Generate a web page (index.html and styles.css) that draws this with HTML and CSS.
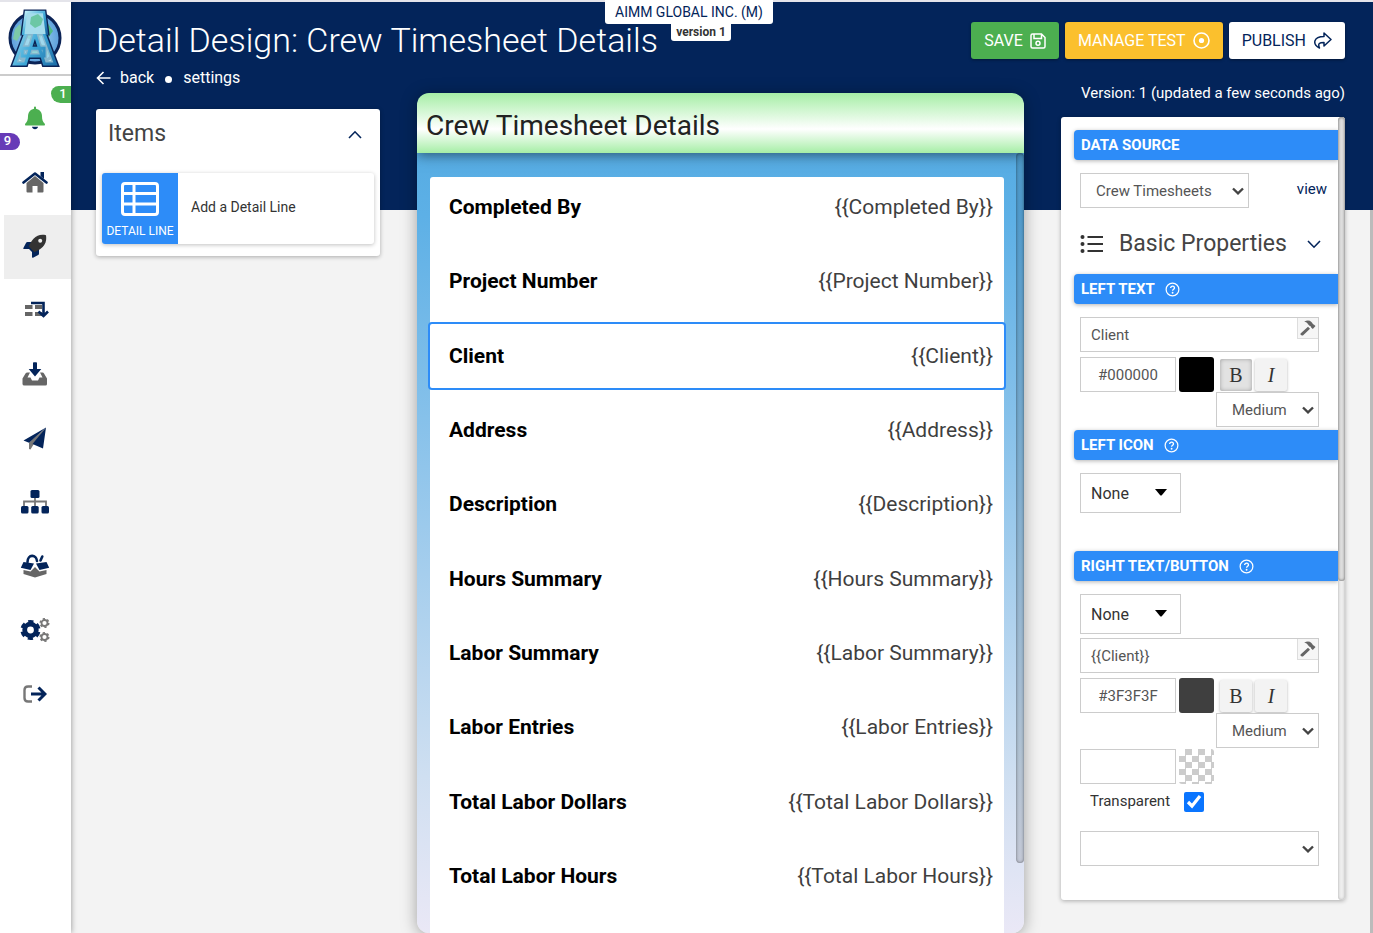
FILE: index.html
```html
<!doctype html>
<html lang="en">
    <head>
        <meta charset="utf-8">
        <title>Detail Design: Crew Timesheet Details</title>
        <link rel="stylesheet" href="styles.css">
    </head>
    <body>
        <!-- shared icons -->
        <svg class="defs" width="0" height="0" aria-hidden="true">
            <symbol id="help" viewBox="0 0 16 16">
                <circle cx="8" cy="8" r="6.8" fill="none" stroke="currentColor" stroke-width="1.3"/>
                <path d="M6 6.4c0-2.6 4.1-2.5 4.1 0 0 1.4-2 1.4-2 3" fill="none" stroke="currentColor" stroke-width="1.4"/>
                <circle cx="8.1" cy="11.5" r="1" fill="currentColor"/>
            </symbol>
            <symbol id="hammer" viewBox="0 0 16 16">
                <path d="M.8 13.2 8 6.7l2 2.1-6.8 6.4c-1.500 1.200-3.700-.6-2.400-2z" fill="currentColor"/>
                <path d="M4.200 1.800C7 .1 9.500.3 11.400 2l1.100 1.300c.2.800.5 1.200 1.300 1.100l1.700 1.700-2.700 2.900-1.700-1.600c.1-.8-.3-1.200-1-1.200L8 4.200C7.400 2.800 6 2.200 4.200 1.800z" fill="currentColor"/>
            </symbol>
            <symbol id="chev" viewBox="0 0 12 8">
                <path d="M1 1.500 6 6.300 11 1.500" fill="none" stroke="currentColor" stroke-width="2.400"/>
            </symbol>
            <symbol id="caret" viewBox="0 0 12 7"><path d="M0 0h12L6.800 6.200q-.8.7-1.600 0z" fill="currentColor"/></symbol>
        </svg>

        <nav class="sidebar">
            <a class="logo" href="#" aria-label="Home page">
                <svg width="56" height="60" viewBox="0 0 56 60">
                    <defs>
                        <linearGradient id="ice" x1="0" y1="0" x2="1" y2="1">
                            <stop offset="0" stop-color="#c9f4fb"/>
                            <stop offset=".5" stop-color="#3fa9d8"/>
                            <stop offset="1" stop-color="#155f9c"/>
                        </linearGradient>
                        <radialGradient id="sea"><stop offset="0" stop-color="#a9dcf5"/><stop offset="1" stop-color="#5b9ddb"/></radialGradient>
                    </defs>
                    <circle cx="28" cy="30" r="25" fill="url(#sea)" stroke="#0b2356" stroke-width="3"/>
                    <path d="M17 12c8-5 18-4 23 2l6 9-5 7-6-3-4 6 7 6 4 7-8 6-10-5-3-9 3-6-8-4-2-8z" fill="#4fb984"/>
                    <path d="M8 21l5-5 2 8-5 9-4-2z" fill="#7cc9a8"/>
                    <text class="mark mark-edge" x="28" y="56" text-anchor="middle">A</text>
                    <path d="M15 26l3-23h20l3 23z" fill="#0b2356" stroke="#0b2356" stroke-width="3"/>
                    <text class="mark" x="28" y="56" text-anchor="middle">A</text>
                    <path d="M16 26l3-22h18l3 22z" fill="#a5dcec"/>
                    <path d="M24 9l7-3 5 5-2 6-6 3-5-4z" fill="#6cc7a5"/>
                    <path d="M16 27l3-23h18l3 23" fill="none" stroke="url(#ice)" stroke-width="2.500"/>
                </svg>
            </a>
            <ul class="menu">
                <li><a href="#" aria-label="Notifications">
                    <svg width="22" height="24" viewBox="0 0 22 24"><path d="M10 1.500a1 1 0 0 1 2 0v1.200c4 .8 6 4 6 7.500 0 4 1 5.500 2.600 7.200.8 1 .3 2.100-.8 2.100H2.200c-1.100 0-1.600-1.100-.8-2.100C3 15.700 4 14.200 4 10.200c0-3.500 2-6.700 6-7.500z" fill="#4caf50"/><path d="M8 20.800h6c-.3 3.200-5.700 3.200-6 0z" fill="#03245a"/></svg>
                    </a><span class="badge badge-green">1</span><span class="badge badge-purple">9</span></li>
                <li><a href="#" aria-label="Home">
                    <svg width="26" height="22" viewBox="0 0 26 22"><path d="M4.500 12 13 5l8.500 7v8.500q0 1-1 1h-5V15h-5v6.500h-5q-1 0-1-1z" fill="#666"/><path d="m1.500 11.500 11.500-9 11.500 9" fill="none" stroke="#03245a" stroke-width="2.600" stroke-linecap="round" stroke-linejoin="round"/><path d="M18.500 1h3.500v7l-3.500-3z" fill="#03245a"/></svg></a></li>
                <li class="active"><a href="#" aria-label="Apps">
                    <svg width="24" height="24" viewBox="0 0 24 24"><path d="M9 8H4.500Q3.500 8 3 9L.4 14q-.4 1 .7 1h4.900l3 3v5q0 1 1 .7l5.200-2.600q.8-.5.8-1.500V15z" fill="#03245a"/><path d="M23 1.200c.8 5-.4 9.200-4.500 12.800-2 1.700-4.500 3-7 4.200L5.800 12.500C7 9.500 8.500 7 10.500 4.800 14 1 18 .3 23 1.200z" fill="#333"/><circle cx="17.200" cy="6.800" r="2" fill="#eee"/></svg></a></li>
                <li><a href="#" aria-label="Flows">
                    <svg class="flows" width="24" height="18" viewBox="0 0 24 18"><path d="M0 4h7.500v4H0zM0 11h7.500v4H0zM10 4h7v4h-7zM10 11h7v4h-7z" fill="#666"/><path d="M6 2h12.500v12M13.500 10.500l5 4.500 4.500-4.500" fill="none" stroke="#03245a" stroke-width="2.600"/></svg></a></li>
                <li><a href="#" aria-label="Inbox">
                    <svg width="26" height="24" viewBox="0 0 26 24"><path d="M5.500 10.500H8l-2.500 5h3l1.500 3h6l1.500-3h3l-2.500-5h2.500q1 0 1.500 1l3 5V22q0 1.500-1.500 1.500h-21Q.5 23.500.5 22v-5.500l3-5q.5-1 2-1z" fill="#666"/><path d="M11 1q0-.8.8-.8h2.400q.8 0 .8.800v6h4.300L13 14.500 6.700 7H11z" fill="#03245a"/></svg></a></li>
                <li><a href="#" aria-label="Send">
                    <svg width="24" height="23" viewBox="0 0 24 23"><path d="M23 .5 6 15.500V22l1.500.5 3-5z" fill="#777"/><path d="M23 .5 20 21.500 9.500 17zM23 .5.5 13.500l5.500 2.300z" fill="#03245a"/></svg></a></li>
                <li><a href="#" aria-label="Organization">
                    <svg width="30" height="24" viewBox="0 0 30 24"><path d="M4 17v-5.500h22V17M15 7v10" fill="none" stroke="#777" stroke-width="1.800"/><g fill="#03245a"><rect x="10.500" width="9" height="8" rx="1.500"/><rect x="1" y="16" width="7.500" height="7.500" rx="1.500"/><rect x="11.200" y="16" width="7.500" height="7.500" rx="1.500"/><rect x="21.500" y="16" width="7.500" height="7.500" rx="1.500"/></g></svg></a></li>
                <li><a href="#" aria-label="Packages">
                    <svg width="30" height="24" viewBox="0 0 30 24"><path d="M3.500 16l7 1.500L15 13l4.500 4.500 7-1.500v4L15 23.500 3.500 20z" fill="#666"/><path d="M3.500 8 14 9.500 10.500 16 .8 13.800zM26.500 8 16 9.500l3.500 6.500 9.700-2.200z" fill="#03245a"/><path d="M7.500 8c0-8 9-8 9.500-1M20.500 6.500l1.800-4" fill="none" stroke="#03245a" stroke-width="2.600" stroke-linecap="round"/></svg></a></li>
                <li><a href="#" aria-label="Settings">
                    <svg width="30" height="24" viewBox="0 0 30 24"><circle cx="10.500" cy="12" r="5.800" fill="none" stroke="#03245a" stroke-width="4.800"/><circle cx="10.500" cy="12" r="8.700" fill="none" stroke="#03245a" stroke-width="2.800" stroke-dasharray="5.200 3.911" stroke-dashoffset="-2"/><g fill="none" stroke="#777"><circle cx="24.500" cy="5" r="3" stroke-width="1.800"/><circle cx="24.500" cy="5" r="4.300" stroke-width="1.500" stroke-dasharray="2.200 2.300"/><circle cx="24.500" cy="19" r="3" stroke-width="1.800"/><circle cx="24.500" cy="19" r="4.300" stroke-width="1.500" stroke-dasharray="2.200 2.300"/></g></svg></a></li>
                <li><a href="#" aria-label="Log out">
                    <svg width="24" height="18" viewBox="0 0 24 18"><path d="M9 1.500H5Q1.500 1.500 1.500 5v8q0 3.500 3.500 3.500h4" fill="none" stroke="#777" stroke-width="2.400"/><path d="M8 9h14M15.500 2.500 22 9l-6.500 6.500" fill="none" stroke="#03245a" stroke-width="3"/></svg></a></li>
            </ul>
        </nav>

        <div class="tenant">
            <span class="tenant-name">AIMM GLOBAL INC. (M)</span>
            <span class="tenant-version">version 1</span>
        </div>

        <main class="page">
            <header class="page-head">
                <div>
                    <h1>Detail Design: Crew Timesheet Details</h1>
                    <div class="crumbs">
                        <a href="#"><svg width="15" height="14" viewBox="0 0 15 14"><path d="M14.500 7H1.500M7.500 1l-6 6 6 6" fill="none" stroke="currentColor" stroke-width="1.600"/></svg>back</a>
                        <i class="dot"></i>
                        <a href="#">settings</a>
                    </div>
                </div>
                <div class="actions">
                    <button class="btn btn-save" type="button">SAVE
                        <svg width="16" height="16" viewBox="0 0 16 16" fill="none" stroke="currentColor" stroke-width="1.500"><path d="M1 2.500Q1 1 2.500 1h9L15 4.500v9q0 1.500-1.500 1.500h-11Q1 15 1 13.500zM4 1v4.500h7.500V1"/><circle cx="8" cy="10.300" r="2"/></svg></button>
                    <button class="btn btn-test" type="button">MANAGE TEST
                        <svg width="17" height="17" viewBox="0 0 17 17"><circle cx="8.500" cy="8.500" r="7.500" fill="none" stroke="currentColor" stroke-width="1.600"/><circle cx="8.500" cy="8.500" r="2.600" fill="currentColor"/></svg></button>
                    <button class="btn btn-publish" type="button">PUBLISH
                        <svg width="19" height="17" viewBox="0 0 19 17"><path d="M11 1l7 6.500-7 6.500v-3.500c-4.500 0-6.500.8-4.500 5.500C-1 12 .5 4.500 11 4.500z" fill="none" stroke="currentColor" stroke-width="1.500" stroke-linejoin="round"/></svg></button>
                </div>
            </header>

            <div class="columns">
                <section class="card items">
                    <h2>Items
                        <svg width="14" height="9" viewBox="0 0 14 9"><path d="M1 8l6-6.200L13 8" fill="none" stroke="#03245a" stroke-width="1.600"/></svg></h2>
                    <button class="item" type="button">
                        <span class="item-tile">
                            <svg width="38" height="34" viewBox="0 0 38 34" fill="none" stroke="#fff" stroke-width="3"><rect x="1.500" y="1.500" width="35" height="31" rx="2.500"/><path d="M1.500 11.500h35M1.500 22h35M13 1.500v31"/></svg>
                            DETAIL LINE
                        </span>
                        <span class="item-name">Add a Detail Line</span>
                    </button>
                </section>

                <section class="preview">
                    <h2>Crew Timesheet Details</h2>
                    <div class="preview-body">
                        <ul class="lines">
                            <li><b>Completed By</b><span>{{Completed By}}</span></li>
                            <li><b>Project Number</b><span>{{Project Number}}</span></li>
                            <li class="selected"><b>Client</b><span>{{Client}}</span></li>
                            <li><b>Address</b><span>{{Address}}</span></li>
                            <li><b>Description</b><span>{{Description}}</span></li>
                            <li><b>Hours Summary</b><span>{{Hours Summary}}</span></li>
                            <li><b>Labor Summary</b><span>{{Labor Summary}}</span></li>
                            <li><b>Labor Entries</b><span>{{Labor Entries}}</span></li>
                            <li><b>Total Labor Dollars</b><span>{{Total Labor Dollars}}</span></li>
                            <li><b>Total Labor Hours</b><span>{{Total Labor Hours}}</span></li>
                        </ul>
                        <i class="thumb"></i>
                    </div>
                </section>

                <aside class="side">
                    <p class="updated">Version: 1 (updated a few seconds ago)</p>
                    <form class="card props">
                        <div class="props-body">
                            <h3><label for="source">DATA SOURCE</label></h3>
                            <div class="fields source">
                                <span class="select select-source"><select id="source"><option>Crew Timesheets</option></select><svg width="12" height="8"><use href="#chev"/></svg></span>
                                <a href="#">view</a>
                            </div>

                            <h2><svg width="24" height="20" viewBox="0 0 24 20" fill="#333"><circle cx="2.500" cy="3" r="2"/><circle cx="2.500" cy="10" r="2"/><circle cx="2.500" cy="17" r="2"/><path d="M7.500 2H23v2H7.500zM7.500 9H23v2H7.500zM7.500 16H23v2H7.500z"/></svg>
                                <span>Basic Properties</span>
                                <svg width="14" height="9" viewBox="0 0 14 9"><path d="M1 1l6 6.200L13 1" fill="none" stroke="#03245a" stroke-width="1.600"/></svg></h2>

                            <h3><label for="left-text">LEFT TEXT</label><svg width="15" height="15"><use href="#help"/></svg></h3>
                            <div class="fields">
                                <div class="text">
                                    <input id="left-text" type="text" value="Client">
                                    <button class="build" type="button" aria-label="Build left text"><svg width="16" height="16"><use href="#hammer"/></svg></button>
                                </div>
                                <div class="format">
                                    <input class="hex" type="text" value="#000000" aria-label="Left text color">
                                    <button class="swatch black" type="button" aria-label="Pick left text color"></button>
                                    <button class="toggle on" type="button">B</button>
                                    <button class="toggle" type="button"><em>I</em></button>
                                </div>
                                <span class="select select-size"><select aria-label="Left text size"><option>Medium</option></select><svg width="12" height="8"><use href="#chev"/></svg></span>
                            </div>

                            <h3><label for="left-icon">LEFT ICON</label><svg width="15" height="15"><use href="#help"/></svg></h3>
                            <div class="fields left-icon">
                                <span class="select select-icon"><select id="left-icon"><option>None</option></select><svg width="12" height="7"><use href="#caret"/></svg></span>
                            </div>

                            <h3><label for="right-text">RIGHT TEXT/BUTTON</label><svg width="15" height="15"><use href="#help"/></svg></h3>
                            <div class="fields">
                                <span class="select select-icon"><select aria-label="Right icon"><option>None</option></select><svg width="12" height="7"><use href="#caret"/></svg></span>
                                <div class="text">
                                    <input id="right-text" type="text" value="{{Client}}">
                                    <button class="build" type="button" aria-label="Build right text"><svg width="16" height="16"><use href="#hammer"/></svg></button>
                                </div>
                                <div class="format">
                                    <input class="hex" type="text" value="#3F3F3F" aria-label="Right text color">
                                    <button class="swatch grey" type="button" aria-label="Pick right text color"></button>
                                    <button class="toggle" type="button">B</button>
                                    <button class="toggle" type="button"><em>I</em></button>
                                </div>
                                <span class="select select-size"><select aria-label="Right text size"><option>Medium</option></select><svg width="12" height="8"><use href="#chev"/></svg></span>
                                <div class="format background">
                                    <input class="hex" type="text" value="" aria-label="Background color">
                                    <button class="swatch checker" type="button" aria-label="Pick background color"></button>
                                </div>
                                <div class="transparent">
                                    <label for="transparent">Transparent</label>
                                    <input id="transparent" type="checkbox" checked>
                                </div>
                                <span class="select select-action"><select aria-label="Button action"><option></option></select><svg width="12" height="8"><use href="#chev"/></svg></span>
                            </div>
                        </div>
                        <div class="track"><i class="thumb"></i></div>
                    </form>
                </aside>
            </div>
        </main>
    </body>
</html>
```
FILE: styles.css
```css
*{box-sizing:border-box;}
body{margin:0;height:100vh;display:flex;overflow:hidden;border-top:2px solid #e4e4ea;background:#f3f3f3;color:#333;font:16px/20px Roboto,"Liberation Sans",sans-serif;}
h1,h2,h3,p,ul{margin:0;padding:0;font-weight:400;}
ul{list-style:none;}
a{color:#03245a;text-decoration:none;}
button,input,select{margin:0;font-family:inherit;font-size:15px;color:#333;}
button{padding:0;border:0;cursor:pointer;}
svg{flex:none;}
.defs{position:absolute;}

/* sidebar */
.sidebar{flex:none;width:71px;background:#fff;box-shadow:0 0 6px rgba(0,0,0,.4);z-index:2;}
.logo{display:flex;height:74px;padding:6px 2px 0 0;justify-content:center;border-bottom:2px solid #ccc;}
.logo svg{overflow:visible;}
.mark{font:900 60px/60px Roboto,sans-serif;fill:#a5dcec;fill-opacity:.8;stroke:url(#ice);stroke-width:3px;}
.mark-edge{fill:none;stroke:#0b2356;stroke-width:6px;}
.menu{padding-top:11px;}
.menu li{position:relative;height:64px;margin-left:4px;}
.menu a{display:flex;height:100%;padding:0 6px 2px 0;align-items:center;justify-content:center;}
.menu .active{background:#eee;}
.menu .flows{margin-left:4px;}
.badge{position:absolute;height:17px;color:#fff;font:500 13px/16px Roboto,sans-serif;text-align:center;}
.badge-green{top:-1px;right:0;width:20px;padding-left:4px;background:#4caf50;border-radius:8px 0 0 10px;}
.badge-purple{top:46px;left:-4px;width:20px;padding-right:5px;background:#673ab7;border-radius:0 10px 8px 0;}

/* tenant tag hanging over the page head */
.tenant{position:absolute;top:0;left:5px;right:0;z-index:3;display:flex;flex-direction:column;align-items:center;pointer-events:none;}
.tenant-name{padding:2px 10px;background:#fff;border-radius:0 0 3px 3px;color:#03245a;font-size:14px;}
.tenant-version{margin-left:24px;padding:0 5px;background:#fff;border-radius:0 0 3px 3px;font-size:12px;font-weight:700;line-height:17px;}

/* page */
.page{flex:1;min-width:0;display:flex;flex-direction:column;padding:20px 28px 0 25px;background:linear-gradient(#03245a,#03245a) 0 0/100% 208px no-repeat,linear-gradient(#bbb,#bbb) 100% 0/3px 100% no-repeat,#f3f3f3;}
.page-head{display:flex;justify-content:space-between;align-items:flex-start;height:64px;color:#fff;}
h1{font-size:34px;font-weight:300;line-height:36px;}
.crumbs{display:flex;align-items:center;margin-top:12px;line-height:16px;}
.crumbs a{display:flex;align-items:center;gap:9px;color:#fff;}
.dot{width:7px;height:7px;margin:2px 11px 0;border-radius:50%;background:#fff;}
.actions{display:flex;gap:6px;}
.btn{display:flex;align-items:center;gap:7px;height:37px;padding:0 13px;border-radius:3px;color:#fff;font-size:16px;box-shadow:0 1px 3px rgba(0,0,0,.4);}
.btn-save{background:#4caf50;}
.btn-test{background:#fbc02d;}
.btn-publish{background:#fff;color:#03245a;}
.columns{flex:1;min-height:0;display:grid;grid-template-columns:284px 1fr 284px;gap:37px;}
.card{background:#fff;border-radius:3px;box-shadow:0 1px 4px rgba(0,0,0,.3);}

/* items */
.items{align-self:start;margin-top:23px;padding:10px 6px 12px;}
.items h2{display:flex;justify-content:space-between;align-items:center;padding:0 12px 0 6px;margin-bottom:24px;font-size:23px;line-height:30px;color:#444;}
.item{display:flex;align-items:center;width:100%;height:71px;background:#fff;border-radius:3px;box-shadow:0 1px 4px rgba(0,0,0,.25);overflow:hidden;text-align:left;}
.item-tile{display:flex;flex-direction:column;align-items:center;justify-content:space-between;width:76px;height:100%;padding:9px 0 5px;background:#2d8cf8;color:#fff;font-size:12px;line-height:16px;}
.item-name{padding:0 0 3px 13px;font-size:14px;}

/* preview */
.preview{display:flex;flex-direction:column;margin-top:7px;border-radius:12px;box-shadow:0 2px 16px rgba(0,0,0,.35);overflow:hidden;}
.preview h2{position:relative;z-index:1;height:60px;padding:3px 0 0 9px;background:linear-gradient(#a6eea6,#fff 60%,#a6eea6);box-shadow:0 2px 12px rgba(0,0,0,.5);font-size:28px;line-height:60px;color:#222;}
.preview-body{position:relative;flex:1;display:flex;padding:24px 20px 0 13px;background:linear-gradient(#56ace3,#5db0e6 8%,#cfdff1 80%,#eae8f6);}
.preview-body .thumb{position:absolute;top:0;right:0;width:8px;height:91%;border-radius:4px;background:rgba(0,0,0,.12);box-shadow:inset 0 0 3px rgba(0,0,0,.5);}
.lines{flex:1;display:flex;flex-direction:column;justify-content:space-between;padding-bottom:27px;background:#fff;border-radius:3px 3px 0 0;font-size:21px;}
.lines li{position:relative;display:flex;align-items:center;justify-content:space-between;height:60px;padding:0 11px 0 19px;color:#3f3f3f;}
.lines b{color:#000;}
.lines .selected:after{content:"";position:absolute;inset:-4px -2px;border:2px solid #2d8cf8;border-radius:4px;}

/* properties */
.updated{font-size:15px;line-height:14px;color:#fff;text-align:right;white-space:nowrap;}
.props{display:flex;height:783px;margin-top:17px;}
.props-body{flex:1;padding:13px 0 0 13px;}
.track{width:7px;background:#eee;border-radius:4px;box-shadow:inset 0 0 3px rgba(0,0,0,.3);}
.track .thumb{display:block;height:464px;border-radius:4px;background:#ddd;box-shadow:inset 0 0 3px rgba(0,0,0,.6);}
.props h3{display:flex;align-items:center;gap:10px;height:30px;padding-left:7px;background:#2d8cf8;border-radius:4px 0 0 4px;box-shadow:0 1px 4px rgba(0,0,0,.3);color:#fff;font-size:15px;font-weight:700;}
.props h2{display:flex;align-items:center;height:40px;margin:16px 17px 10px 6px;font-size:23px;color:#444;}
.props h2 span{flex:1;padding-left:15px;}
.fields{display:flex;flex-direction:column;align-items:flex-start;padding:13px 19px 3px 6px;}
.source{flex-direction:row;align-items:center;justify-content:space-between;padding:13px 11px 0 6px;font-size:15px;}
.source a{padding-bottom:3px;}
.left-icon{padding-bottom:38px;}
.select{position:relative;display:flex;height:35px;}
.select select{width:100%;padding:0 15px;border:1px solid #ccc;border-radius:0;background:#fff;appearance:none;color:#555;}
.select svg{position:absolute;top:50%;right:5px;margin-top:-4px;color:#444;pointer-events:none;}
.select-source{width:169px;}
.select-size{width:103px;align-self:flex-end;}
.select-icon{width:101px;height:40px;}
.select-icon select{padding:0 10px;font-size:16px;color:#333;}
.select-icon svg{right:14px;color:#000;}
.select-icon + .text{margin-top:4px;}
.select-action{width:100%;margin-top:19px;}
.text{position:relative;display:flex;width:100%;}
.text input,.hex{height:35px;padding:0 10px;border:1px solid #ccc;border-radius:0;background:#fff;color:#555;}
.text input{width:100%;}
.build{position:absolute;top:1px;right:1px;width:21px;height:21px;padding:2px;background:#f6f6f6;border:solid #ddd;border-width:0 0 1px 1px;color:#666;}
.build svg{display:block;}
.format{display:flex;align-items:center;gap:3px;margin-top:5px;}
.background{margin-top:1px;}
.format .hex{width:96px;text-align:center;}
.swatch{width:35px;height:35px;margin-right:3px;border-radius:3px;}
.black{background:#000;}
.grey{background:#3f3f3f;}
.checker{background:repeating-conic-gradient(#ccc 0 25%,#fff 0 50%) 0 0/13px 13px;}
.toggle{width:32px;height:32px;background:#f3f3f3;border-radius:2px;box-shadow:0 1px 3px rgba(0,0,0,.3);font:20px/32px "Liberation Serif",serif;}
.on{background:#e2e2e2;box-shadow:inset 0 0 4px rgba(0,0,0,.3);}
.transparent{display:flex;align-items:center;gap:14px;height:28px;padding:7px 0 0 10px;font-size:15px;}
.transparent label{margin-top:-2px;}
.transparent input{width:20px;height:20px;accent-color:#0a75ff;}
```
